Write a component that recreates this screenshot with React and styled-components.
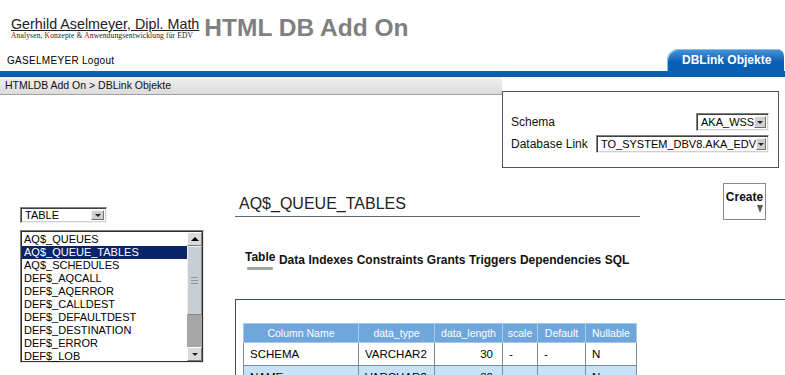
import styled, { createGlobalStyle } from "styled-components";

const GlobalStyle = createGlobalStyle`
  html, body {
    margin: 0;
    padding: 0;
    background: #fff;
  }
  body {
    width: 785px;
    height: 375px;
    overflow: hidden;
    font-family: "Liberation Sans", Arial, sans-serif;
    color: #000;
  }
`;

const objects = [
  "AQ$_QUEUES",
  "AQ$_QUEUE_TABLES",
  "AQ$_SCHEDULES",
  "DEF$_AQCALL",
  "DEF$_AQERROR",
  "DEF$_CALLDEST",
  "DEF$_DEFAULTDEST",
  "DEF$_DESTINATION",
  "DEF$_ERROR",
  "DEF$_LOB",
];

const tabs = ["Table", "Data", "Indexes", "Constraints", "Grants", "Triggers", "Dependencies", "SQL"];

const columns = [
  { name: "Column Name", width: 115 },
  { name: "data_type", width: 76 },
  { name: "data_length", width: 68 },
  { name: "scale", width: 35 },
  { name: "Default", width: 48 },
  { name: "Nullable", width: 51 },
];

const rows = [
  ["SCHEMA", "VARCHAR2", "30", "-", "-", "N"],
  ["NAME", "VARCHAR2", "30", "-", "-", "N"],
];

const Select = ({ value, width, height = 18 }) => (
  <SelectBox $width={width} $height={height}>
    <span>{value}</span>
    <SelectButton>
      <DownArrow />
    </SelectButton>
  </SelectBox>
);

const App = () => {
  return (
    <>
      <GlobalStyle />
      <Header>
        <Brand>
          <BrandName href="#">Gerhild Aselmeyer, Dipl. Math</BrandName>
          <BrandTag>
            <Initial>A</Initial>nalysen, <Initial>K</Initial>onzepte &amp;{" "}
            <Initial>A</Initial>nwendungsentwicklung für EDV
          </BrandTag>
        </Brand>
        <AppTitle>HTML DB Add On</AppTitle>
      </Header>

      <NavRow>
        <UserLinks>GASELMEYER Logout</UserLinks>
        <NavTab>DBLink Objekte</NavTab>
      </NavRow>
      <BlueBar />

      <TopRow>
        <Breadcrumb>HTMLDB Add On &gt; DBLink Objekte</Breadcrumb>
        <RegionBox>
          <Field>
            <Label>Schema</Label>
            <Select value="AKA_WSS" width={73} />
          </Field>
          <Field>
            <Label>Database Link</Label>
            <Select value="TO_SYSTEM_DBV8.AKA_EDV" width={173} />
          </Field>
        </RegionBox>
      </TopRow>

      <LowerSection>
        <LeftColumn>
          <Select value="TABLE" width={87} height={16} />
          <ListBox>
            <List>
              {objects.map((o) => (
                <ListItem key={o} $selected={o === "AQ$_QUEUE_TABLES"}>
                  {o}
                </ListItem>
              ))}
            </List>
            <ScrollBar>
              <ScrollButton>
                <UpArrow />
              </ScrollButton>
              <Thumb>
                <Grip />
                <Grip />
                <Grip />
              </Thumb>
              <Track />
              <ScrollButton>
                <DownArrow />
              </ScrollButton>
            </ScrollBar>
          </ListBox>
        </LeftColumn>

        <MainColumn>
          <MainTop>
            <HeadingBlock>
              <Heading>AQ$_QUEUE_TABLES</Heading>
            </HeadingBlock>
            <CreateButton>
              Create
              <CreateArrow />
            </CreateButton>
          </MainTop>

          <TabRow>
            {tabs.map((t) => (
              <TabItem key={t} $active={t === "Table"}>
                {t}
              </TabItem>
            ))}
          </TabRow>

          <TableFrame>
            <ColumnTable>
              <colgroup>
                {columns.map((c) => (
                  <col key={c.name} style={{ width: c.width }} />
                ))}
              </colgroup>
              <thead>
                <tr>
                  {columns.map((c) => (
                    <HeadCell key={c.name}>{c.name}</HeadCell>
                  ))}
                </tr>
              </thead>
              <tbody>
                {rows.map((r, i) => (
                  <BodyRow key={i} $alt={i % 2 === 1}>
                    {r.map((v, j) => (
                      <BodyCell key={j} $right={j === 2}>
                        {v}
                      </BodyCell>
                    ))}
                  </BodyRow>
                ))}
              </tbody>
            </ColumnTable>
          </TableFrame>
        </MainColumn>
      </LowerSection>
    </>
  );
};

const Header = styled.header`
  height: 40px;
  box-sizing: border-box;
  padding: 14px 0 0 11px;
  display: flex;
  align-items: flex-start;
`;
const Brand = styled.div`
  display: flex;
  flex-direction: column;
  margin-top: 2px;
`;
const BrandName = styled.a`
  font-size: 14.3px;
  line-height: 16px;
  color: #222;
  text-decoration: underline;
`;
const BrandTag = styled.div`
  font-family: "Liberation Serif", "Times New Roman", serif;
  font-size: 7.5px;
  line-height: 8px;
  letter-spacing: 0.15px;
  color: #1a1a1a;
  white-space: nowrap;
`;
const Initial = styled.span`
  color: #b00000;
`;
const AppTitle = styled.h1`
  margin: 0 0 0 5px;
  font-size: 24.5px;
  line-height: 28px;
  font-weight: bold;
  color: #808080;
`;

const NavRow = styled.nav`
  height: 31px;
  display: flex;
  justify-content: space-between;
  align-items: flex-end;
`;
const UserLinks = styled.div`
  padding-left: 7px;
  margin-bottom: 4px;
  font-size: 10px;
  line-height: 12px;
  letter-spacing: 0.3px;
`;
const NavTab = styled.div`
  width: 117px;
  height: 22px;
  margin-right: 1px;
  box-sizing: border-box;
  padding-left: 15px;
  border-radius: 12px 7px 0 0;
  background: linear-gradient(#4a96dc, #0b5fb2 60%);
  box-shadow: inset 1px 1px 0 #8cc0ec;
  color: #fff;
  font-size: 12px;
  font-weight: bold;
  line-height: 22px;
`;
const BlueBar = styled.div`
  height: 6px;
  background: linear-gradient(#0d64b4, #0a58a4);
`;

const TopRow = styled.div`
  height: 91px;
  display: flex;
  align-items: flex-start;
`;
const Breadcrumb = styled.div`
  width: 502px;
  height: 18px;
  box-sizing: border-box;
  padding-left: 5px;
  background: linear-gradient(#f0f0f0, #dcdcdc);
  border-bottom: 1px solid #a0a0a0;
  font-size: 10.5px;
  line-height: 17px;
  color: #111;
`;
const RegionBox = styled.div`
  margin-top: 14px;
  width: 277px;
  height: 77px;
  box-sizing: border-box;
  border: 1px solid #4b5763;
  padding: 21px 9px 0 8px;
  display: flex;
  flex-direction: column;
  gap: 4px;
`;
const Field = styled.div`
  height: 18px;
  display: flex;
  align-items: center;
  justify-content: space-between;
`;
const Label = styled.span`
  font-size: 12px;
  color: #111;
`;

const SelectBox = styled.div`
  width: ${(p) => p.$width}px;
  height: ${(p) => p.$height}px;
  box-sizing: border-box;
  display: flex;
  align-items: center;
  justify-content: space-between;
  padding: 0 2px 0 4px;
  background: #fff;
  border: 1px solid;
  border-color: #808080 #f0f0f0 #f0f0f0 #808080;
  box-shadow: inset 1px 1px 0 #404040, inset -1px -1px 0 #d4d0c8;
  font-size: 11px;
  color: #000;
`;
const SelectButton = styled.span`
  width: 13px;
  height: calc(100% - 4px);
  box-sizing: border-box;
  display: flex;
  align-items: center;
  justify-content: center;
  background: #cfcfcf;
  border: 1px solid;
  border-color: #f4f4f4 #707070 #707070 #f4f4f4;
`;
const DownArrow = styled.span`
  width: 0;
  height: 0;
  border-left: 3px solid transparent;
  border-right: 3px solid transparent;
  border-top: 3px solid #222;
`;
const UpArrow = styled.span`
  width: 0;
  height: 0;
  border-left: 4px solid transparent;
  border-right: 4px solid transparent;
  border-bottom: 4px solid #000;
`;

const LowerSection = styled.div`
  display: grid;
  grid-template-columns: 184px 1fr;
  column-gap: 31px;
  padding-left: 20px;
`;
const LeftColumn = styled.div`
  padding-top: 39px;
  display: flex;
  flex-direction: column;
  gap: 7px;
`;
const ListBox = styled.div`
  width: 184px;
  height: 133px;
  box-sizing: border-box;
  display: flex;
  background: #fff;
  border: 1px solid;
  border-color: #7a7a7a #e8e8e8 #e8e8e8 #7a7a7a;
  box-shadow: inset 1px 1px 0 #303030, inset -1px -1px 0 #303030;
  padding: 1px;
`;
const List = styled.div`
  flex: 1;
  padding-top: 1px;
`;
const ListItem = styled.div`
  height: 13px;
  line-height: 13px;
  padding-left: 2px;
  font-size: 11px;
  background: ${(p) => (p.$selected ? "#0a246a" : "transparent")};
  color: ${(p) => (p.$selected ? "#fff" : "#000")};
  white-space: nowrap;
`;
const ScrollBar = styled.div`
  width: 15px;
  display: flex;
  flex-direction: column;
  background: #a8a8a8;
`;
const ScrollButton = styled.div`
  height: 14px;
  box-sizing: border-box;
  display: flex;
  align-items: center;
  justify-content: center;
  background: #d8dadc;
  border: 1px solid;
  border-color: #fff #7a7a7a #7a7a7a #fff;
`;
const Thumb = styled.div`
  height: 69px;
  box-sizing: border-box;
  display: flex;
  flex-direction: column;
  align-items: center;
  justify-content: center;
  gap: 2px;
  background: #c9ced4;
  border: 1px solid;
  border-color: #eef0f2 #808890 #808890 #eef0f2;
`;
const Grip = styled.span`
  width: 7px;
  height: 1px;
  background: #8c949c;
`;
const Track = styled.div`
  flex: 1;
  background: #a6a6a6;
`;

const MainColumn = styled.div`
  display: flex;
  flex-direction: column;
  min-width: 0;
`;
const MainTop = styled.div`
  margin-top: 14px;
  display: flex;
  align-items: flex-start;
`;
const HeadingBlock = styled.div`
  width: 405px;
  padding-top: 12px;
  border-bottom: 1px solid #5e6b75;
`;
const Heading = styled.h2`
  margin: 0;
  padding: 0 0 3px 4px;
  font-size: 16px;
  line-height: 19px;
  font-weight: normal;
  color: #222;
`;
const CreateButton = styled.div`
  margin: 1px 0 0 83px;
  width: 43px;
  height: 37px;
  box-sizing: border-box;
  padding-top: 6px;
  border: 1px solid #8a8a8a;
  display: flex;
  flex-direction: column;
  align-items: center;
  font-size: 12px;
  line-height: 14px;
  font-weight: bold;
  color: #111;
`;
const CreateArrow = styled.span`
  align-self: flex-end;
  margin: 1px 2px 0 0;
  width: 0;
  height: 0;
  border-left: 3px solid transparent;
  border-right: 3px solid transparent;
  border-top: 8px solid #5a5a5a;
`;

const TabRow = styled.div`
  margin-top: 33px;
  padding-left: 10px;
  display: flex;
  align-items: flex-start;
  gap: 3.5px;
`;
const TabItem = styled.span`
  font-size: 12px;
  line-height: 14px;
  font-weight: bold;
  color: #111;
  margin-top: ${(p) => (p.$active ? "-3px" : "0")};
  &::after {
    content: "";
    display: ${(p) => (p.$active ? "block" : "none")};
    width: 26px;
    height: 3px;
    margin: 3px 0 0 2px;
    border-radius: 1px;
    background: #9aab9a;
  }
`;

const TableFrame = styled.div`
  margin-top: 29px;
  width: 550px;
  box-sizing: border-box;
  border: 1px solid #3e4c58;
  border-right: none;
  padding: 23px 7px 20px;
`;
const ColumnTable = styled.table`
  border-collapse: collapse;
  table-layout: fixed;
  width: 393px;
  border: 1px solid #5a82b0;
`;
const HeadCell = styled.th`
  height: 18px;
  padding: 0;
  background: #6fa6dc;
  border: 1px solid #a6c9ec;
  color: #fff;
  font-size: 10.5px;
  font-weight: normal;
  text-align: center;
  white-space: nowrap;
`;
const BodyRow = styled.tr`
  background: ${(p) => (p.$alt ? "#c7e1f7" : "#fff")};
`;
const BodyCell = styled.td`
  height: 22px;
  padding: 0 ${(p) => (p.$right ? "9px" : "5px")} 0 6px;
  border: 1px solid #7b8c9b;
  font-size: 11.5px;
  text-align: ${(p) => (p.$right ? "right" : "left")};
  white-space: nowrap;
`;

export default App;
